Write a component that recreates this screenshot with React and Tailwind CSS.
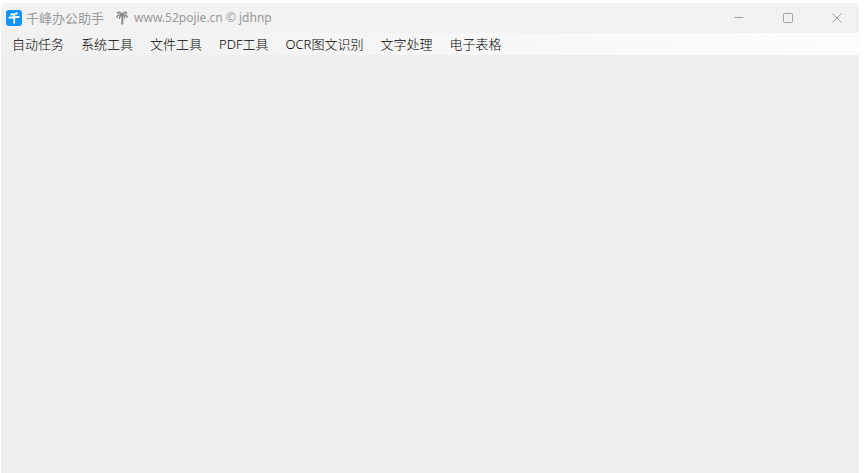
import React, { useState } from "react";

const menus = [
  "自动任务",
  "系统工具",
  "文件工具",
  "PDF工具",
  "OCR图文识别",
  "文字处理",
  "电子表格",
];

const AppIcon = () => (
  <svg className="size-4" viewBox="0 0 16 16" aria-hidden="true">
    <rect width="16" height="16" rx="3" fill="#1592f5" />
    <path
      d="M11.6 3.1C9.6 4 7 4.4 4.6 4.5M2.6 7.6C6 7.4 10 7.1 13.4 6.9M8.2 4.2V13.6"
      fill="none"
      stroke="#fff"
      strokeWidth="1.8"
    />
  </svg>
);

const PalmIcon = () => (
  <svg className="h-[14px] w-3" viewBox="0 0 12 14" fill="none" stroke="#888" aria-hidden="true">
    <path d="M6 3.8C5 1.2 2.6.8 1.2 2.4M6 3.8C7 1.1 9.6.8 10.9 2.6" strokeWidth="1.7" />
    <path d="M6 4C3.4 3.2 1 4.2.8 6.6M6 4C8.8 3.2 11 4.2 11.3 6.6" strokeWidth="1.6" />
    <path d="M6 4.2C4.4 4.6 3.4 5.8 3.3 8M6 4.2C7.8 4.6 8.8 5.4 8.8 7.4" strokeWidth="1.2" />
    <path d="M6.2 4.4C6.7 7.6 6.6 10 6.1 13.5" strokeWidth="1.9" />
  </svg>
);

const WindowButton = ({ label, d }) => (
  <button type="button" aria-label={label} className="flex h-full w-[49px] items-center justify-center hover:bg-gray-200">
    <svg className="size-3" viewBox="0 0 12 12" fill="none" stroke="#a0a0a0" aria-hidden="true">
      <path d={d} />
    </svg>
  </button>
);

const App = () => {
  const [active, setActive] = useState(null);

  return (
    <div className="flex min-h-screen flex-col bg-white pt-[3px] pr-1.5 pl-px font-['Noto_Sans','Noto_Sans_CJK_SC',sans-serif] text-[13px] leading-5">
      <div className="flex grow flex-col overflow-hidden rounded-t-sm bg-[#efefef]">
        <header className="flex h-[30px] items-center bg-[#f2f2f2] pl-[5px] text-[#999]">
          <AppIcon />
          <h1 className="ml-1 flex items-center whitespace-nowrap">
            <span className="mr-3">千峰办公助手</span>
            <PalmIcon />
            <span className="ml-1.5 text-xs">www.52pojie.cn © jdhnp</span>
          </h1>
          <div className="ml-auto flex h-full shrink-0 -mr-0.5">
            <WindowButton label="最小化" d="M1.5 5.5h9" />
            <WindowButton label="最大化" d="M2.5 1.5h7q1 0 1 1v7q0 1-1 1h-7q-1 0-1-1v-7q0-1 1-1z" />
            <WindowButton label="关闭" d="M1.5 1.5l9 9M10.5 1.5l-9 9" />
          </div>
        </header>
        <nav className="flex h-[22px] items-center gap-[17px] bg-linear-to-r from-[#f0f0f0] to-[#fdfdfd] pl-[11px] font-light text-black">
          {menus.map((m) => (
            <button
              key={m}
              type="button"
              aria-pressed={active === m}
              className="whitespace-nowrap"
              onClick={() => setActive(m)}
            >
              {m}
            </button>
          ))}
        </nav>
        <main className="grow" />
      </div>
    </div>
  );
};

export default App;
